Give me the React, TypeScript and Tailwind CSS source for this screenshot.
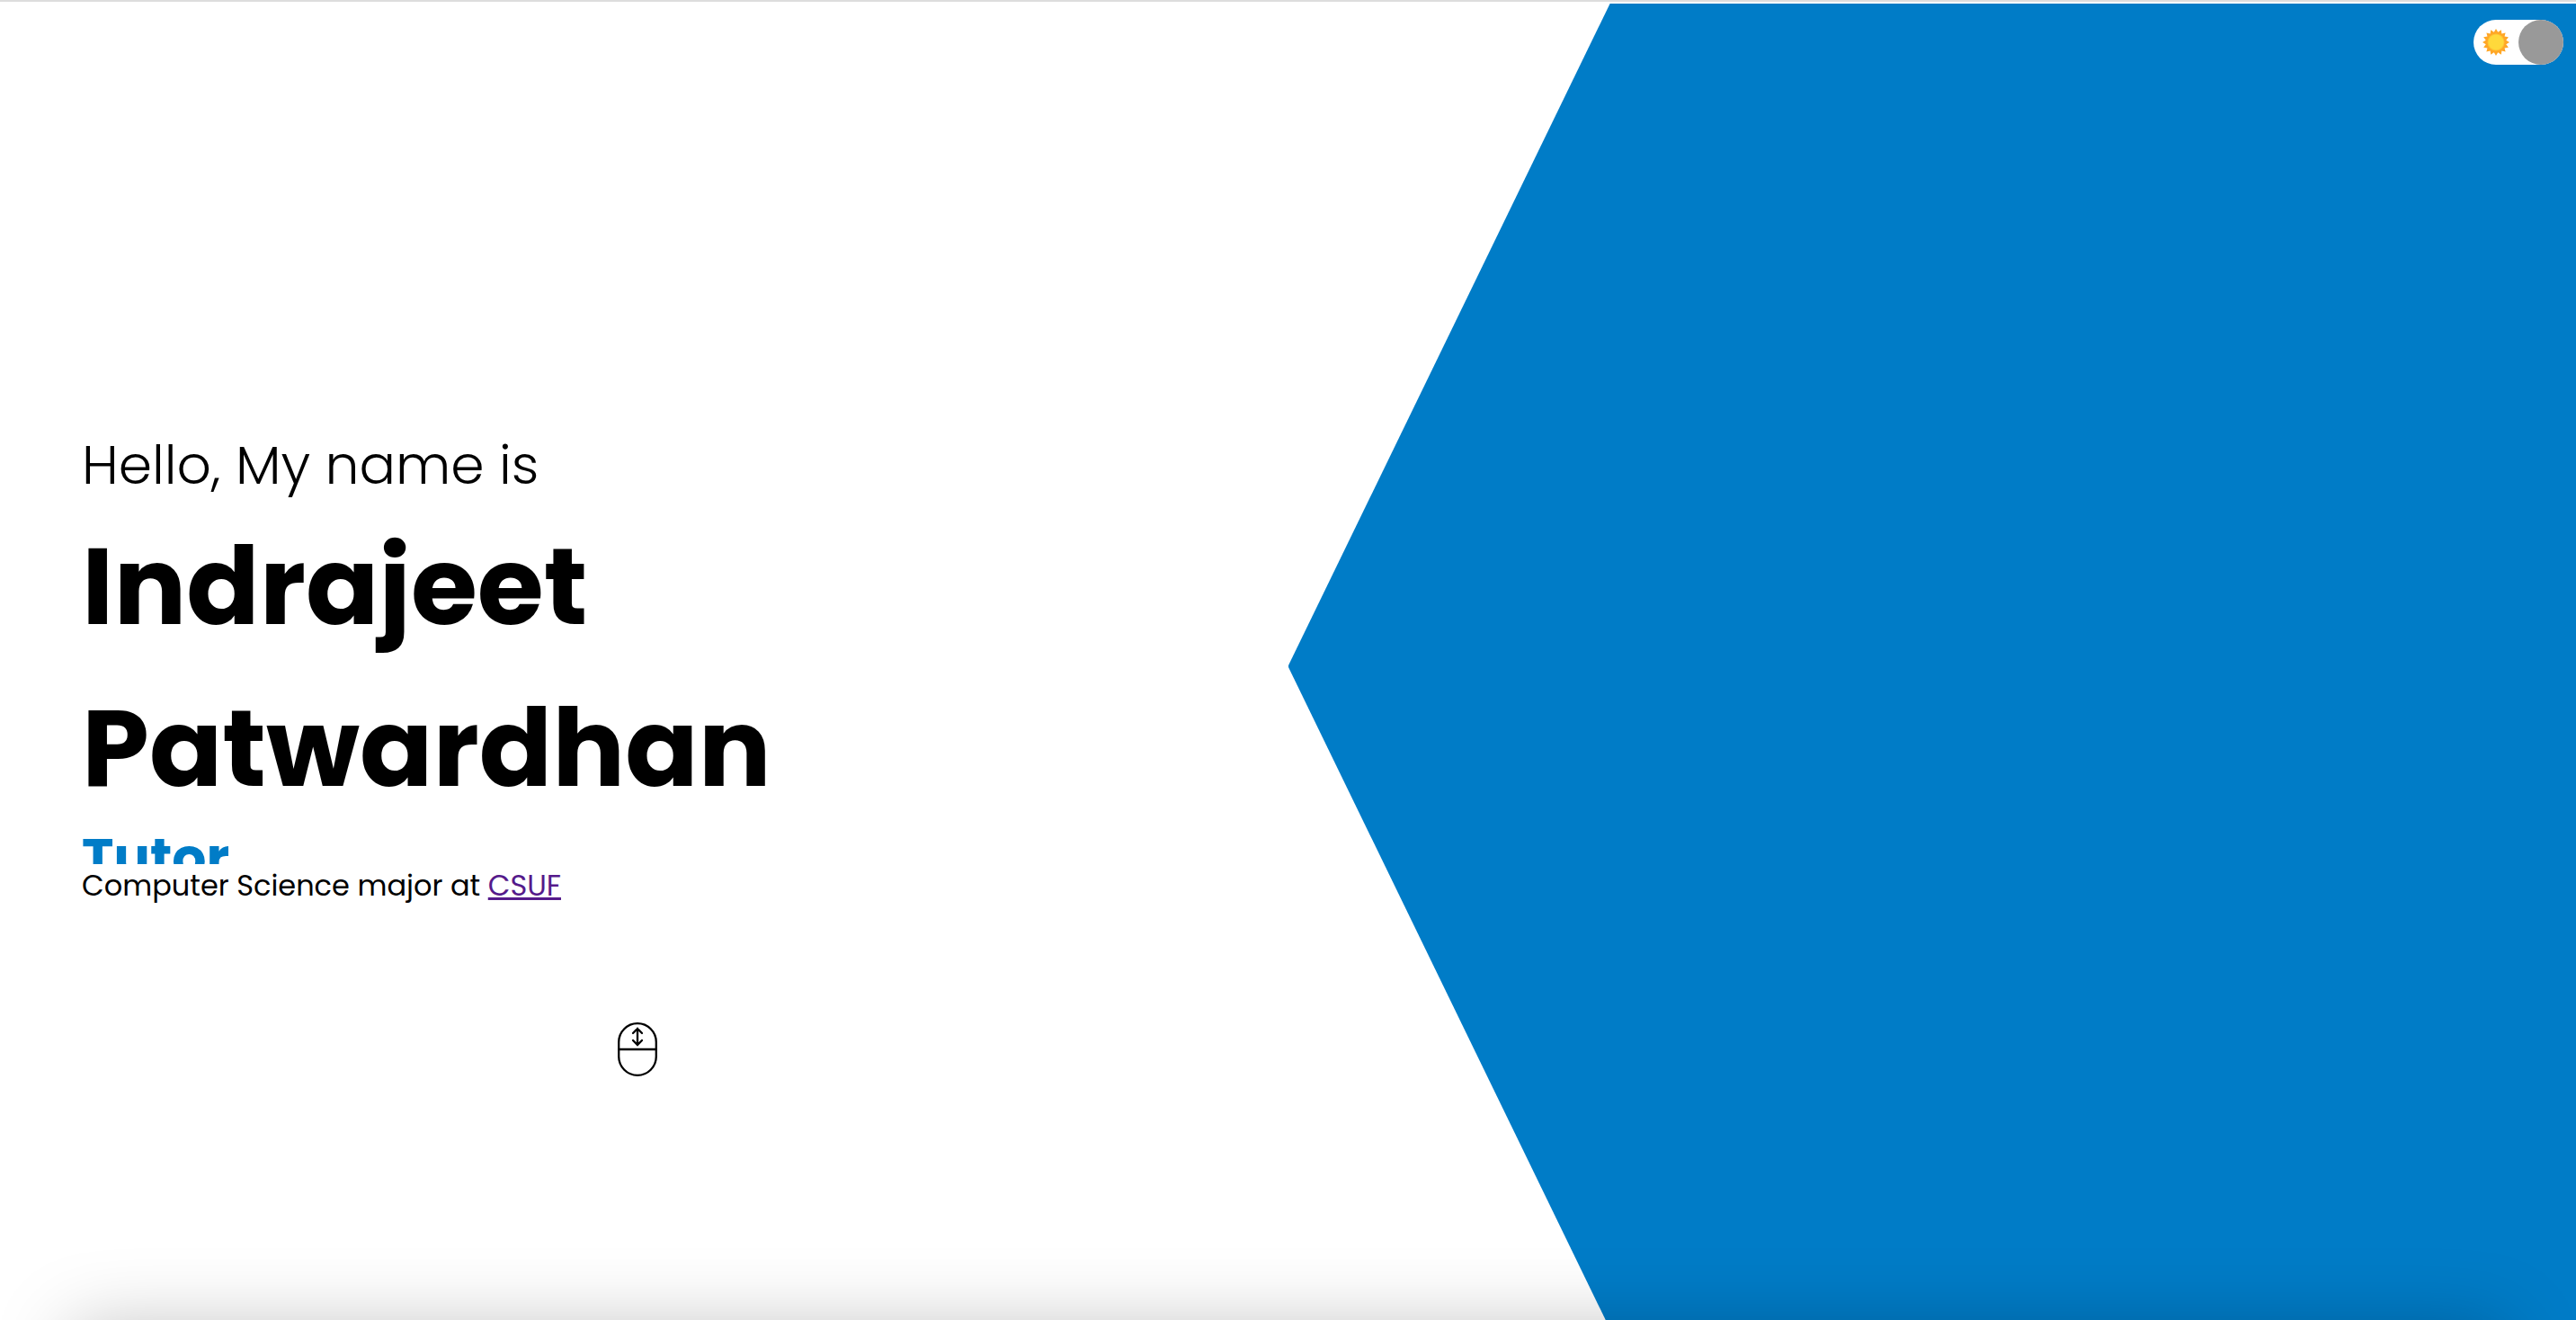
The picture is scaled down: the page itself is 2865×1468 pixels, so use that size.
import { useState } from "react";

const SUN_POINTS = Array.from({ length: 32 }, (_, i) => {
  const radius = i % 2 === 0 ? 15 : 11.5;
  const angle = (i * Math.PI) / 16 - Math.PI / 2;
  return `${(15 + radius * Math.cos(angle)).toFixed(2)},${(15 + radius * Math.sin(angle)).toFixed(2)}`;
}).join(" ");

function SunIcon() {
  return (
    <svg viewBox="0 0 30 30" className="size-[30px]" aria-hidden="true">
      <polygon points={SUN_POINTS} fill="#ffa726" />
      <circle cx="15" cy="15" r="9.5" fill="#ffc433" />
      <circle cx="15" cy="15" r="8.5" fill="#ffd93b" />
    </svg>
  );
}

function MouseIcon() {
  return (
    <svg
      viewBox="0 0 44 60"
      className="h-[60px] w-[44px]"
      fill="none"
      stroke="#000"
      strokeWidth="2.3"
      strokeLinecap="round"
      aria-hidden="true"
    >
      <rect x="1.2" y="1.2" width="41.6" height="57.6" rx="20.8" />
      <path d="M1 30H43" />
      <path d="M22 7V25M17 12L22 7L27 12M17 20L22 25L27 20" />
    </svg>
  );
}

function ThemeToggle() {
  const [light, setLight] = useState(true);
  return (
    <label className="absolute top-[18px] right-[14px] flex h-[50px] w-[100px] cursor-pointer items-center justify-between rounded-full bg-white pl-[10px]">
      <input
        type="checkbox"
        role="switch"
        aria-label="Light theme"
        checked={light}
        onChange={(e) => setLight(e.target.checked)}
        className="peer sr-only"
      />
      <SunIcon />
      <span className="size-[50px] -translate-x-[50px] rounded-full bg-[#999] peer-checked:translate-x-0" />
    </label>
  );
}

export default function App() {
  return (
    <div className="h-screen overflow-hidden border-t-2 border-[#dddddd] bg-white pt-[2px] font-['Poppins','Inter',sans-serif] text-black">
      <main className="relative grid h-[calc(100vh+6px)] grid-cols-2">
        <section className="flex flex-col pt-[468px] pr-[106px] pl-[91px]">
          <p className="text-[60px] leading-[90px] font-light">Hello, My name is</p>
          <h1 className="text-[120px] leading-[180px] font-bold">
            Indrajeet
            <br />
            Patwardhan
          </h1>
          <div className="h-[39px] overflow-hidden text-[60px] leading-[64px] font-bold text-[#007cc7]">
            Tutor
          </div>
          <p className="text-[32px] leading-[48px]">
            Computer Science major at{" "}
            <a href="#csuf" className="text-[#551a8b] underline">
              CSUF
            </a>
          </p>
          <div className="mt-32 flex justify-center">
            <a href="#about" aria-label="Scroll down">
              <MouseIcon />
            </a>
          </div>
        </section>
        <div className="bg-[#007cc7] [clip-path:polygon(25%_0,100%_0,100%_100%,25%_100%,0_50%)]" />
        <ThemeToggle />
      </main>
      <div className="relative mx-20 h-40 shadow-[0_0_86px_rgba(0,0,0,0.26)]" />
    </div>
  );
}
